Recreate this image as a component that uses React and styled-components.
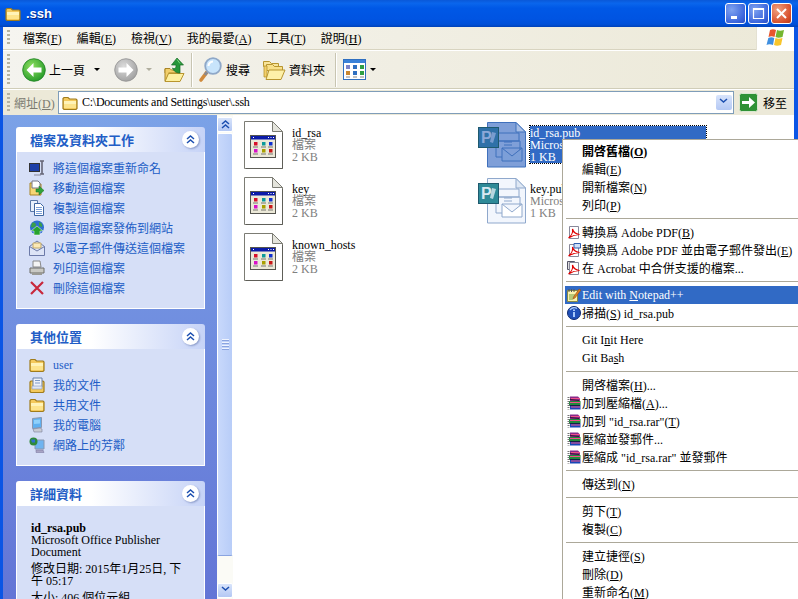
import React from "react";
import styled, { createGlobalStyle } from "styled-components";

const GlobalStyle = createGlobalStyle`
  html, body { margin: 0; padding: 0; background: #ece9d8; }
  body { font-family: "Liberation Serif", "Noto Sans CJK TC", serif; font-size: 12px; color: #000; }
  * { box-sizing: border-box; }
  svg { display: block; flex: none; }
`;

/* "&F" marks the underlined letter, same as a win32 resource string */
const Mnemonic = ({ text }) => {
  const i = text.indexOf("&");
  if (i < 0) return <span>{text}</span>;
  return (
    <span>
      {text.slice(0, i)}
      <u>{text[i + 1]}</u>
      {text.slice(i + 2)}
    </span>
  );
};

// ---------- icons ----------
const FolderIcon = ({ size = 16 }) => (
  <svg width={size} height={size} viewBox="0 0 16 16">
    <path d="M1 5V3.500L2 2.500h4l1.500 1.500H14l1 1v8.500l-1 1H2l-1-1z" fill="#f4c95c" stroke="#a07c1c" strokeWidth="1.200" />
    <path d="M2 6h12v3H2z" fill="#fff3b8" />
    <path d="M2 9h12v4H2z" fill="#fde48c" />
  </svg>
);

const OpenFolderIcon = () => (
  <svg width="24" height="24" viewBox="0 0 24 24">
    <path d="M1.500 3.500h6l2 2h7v3h-15z" fill="#f8e49a" stroke="#b8952f" />
    <path d="M4.500 6.500h6l2 2h8v4h-16z" fill="#f8e08a" stroke="#b8952f" />
    <path d="M2 8h3v11H2z" fill="#f2cf6b" stroke="#b8952f" strokeWidth=".8" />
    <path d="M7 12h16l-4 9.500H4z" fill="#fdf0a8" stroke="#b8952f" />
  </svg>
);

const NavIcon = ({ id, light, dark, ring, dir }) => (
  <svg width="24" height="24" viewBox="0 0 24 24">
    <defs>
      <radialGradient id={id} cx="40%" cy="35%" r="75%">
        <stop offset="0" stopColor={light} />
        <stop offset="1" stopColor={dark} />
      </radialGradient>
    </defs>
    <circle cx="12" cy="12" r="11.300" fill={`url(#${id})`} stroke={ring} strokeWidth=".8" />
    <path
      d={dir === "left" ? "M4.500 12l7-7v4.500h8v5h-8V19z" : "M19.500 12l-7-7v4.500h-8v5h8V19z"}
      fill="#fff"
    />
  </svg>
);

const UpIcon = () => (
  <svg width="22" height="26" viewBox="0 0 22 26">
    <path d="M2 11.500h5l1.500 1.500H15v3H2z" fill="#f2cf6b" stroke="#a98527" />
    <path d="M2 12v12h1l3-8" fill="#f2cf6b" stroke="#a98527" />
    <path d="M5.500 16.500H21l-4 8H2z" fill="#fdf0a0" stroke="#b8952f" />
    <path d="M14 1l6.500 7H17v8c-3 0-6-1-7.500-5 2 1.500 3.500 0 3.500-2V8H8.500z" fill="#27963a" stroke="#176b26" strokeWidth=".7" />
    <path d="M14 2.500l3 4" stroke="#7fd87f" />
  </svg>
);

const SearchIcon = () => (
  <svg width="24" height="26" viewBox="0 0 24 26">
    <path d="M9 15l-6 8" stroke="#d08a3c" strokeWidth="3.600" strokeLinecap="round" />
    <path d="M9 15l-2 3" stroke="#8a8a90" strokeWidth="3" />
    <circle cx="15" cy="9" r="7.800" fill="#c8e4fb" stroke="#8fa8c8" strokeWidth="1.800" />
    <path d="M10.500 9a4.500 4.500 0 0 1 4.500-4.500" stroke="#fff" strokeWidth="2" fill="none" />
  </svg>
);

const ViewsIcon = () => (
  <svg width="24" height="24" viewBox="0 0 24 24">
    <rect x=".5" y="1.500" width="22" height="20" fill="#fff" stroke="#2f6fc0" />
    <rect x="1" y="2" width="21" height="3" fill="#3b82d8" />
    {[3, 10, 17].map((x, i) => (
      <g key={x}>
        <rect x={x} y="7" width="4" height="4" fill={["#7b82c8", "#2f6fc0", "#2e9e44"][i]} />
        <rect x={x} y="13" width="4" height="4" fill={["#c9872f", "#2f6fc0", "#2e9e44"][i]} />
        <rect x={x} y="18.500" width="4" height="1" fill="#888" />
      </g>
    ))}
  </svg>
);

const FlagIcon = () => (
  <svg width="22" height="20" viewBox="0 0 22 20">
    <path d="M5 2c2-1 4-1 6 0l-1.500 7c-2-1-4-1-6 0z" fill="#e8562c" />
    <path d="M12 2c2 1 4 1 7 0l-1.500 7c-3 1-5 1-7 0z" fill="#74b62f" />
    <path d="M3.300 10c2-1 4-1 6 0L8 17c-2-1-5-1-6.500 0z" fill="#3f8fe0" />
    <path d="M10.500 10c2 1 4 1 7 0L16 17c-3 1-5 1-7 0z" fill="#f8c52b" />
  </svg>
);

const GoIcon = () => (
  <svg width="19" height="19" viewBox="0 0 19 19">
    <rect x=".5" y=".5" width="18" height="18" rx="2" fill="#2f9235" stroke="#d8e8d0" />
    <path d="M3 8h7V4l6 5.500-6 5.500v-4H3z" fill="#fff" />
  </svg>
);

const PlainFileIcon = () => (
  <svg width="39" height="48" viewBox="0 0 39 48">
    <path d="M.5.5h28l10 10v37H.5z" fill="#fff" stroke="#7c7c74" />
    <path d="M2 47.500h36.500V12" stroke="#5e5e58" fill="none" />
    <path d="M28.500.5v10h10z" fill="#e4e4dc" stroke="#7c7c74" />
    <rect x="6.500" y="14.500" width="25" height="22" fill="#ece9d8" stroke="#55554f" />
    <rect x="7" y="15" width="24" height="3.500" fill="#0a1aa8" />
    <path d="M9 16.500h1M24 16.500h1M26.500 16.500h1M29 16.500h1" stroke="#fff" />
    {[
      [11, 21, "#d8102a"],
      [19, 21, "#0c9a9a"],
      [26, 21, "#1030d0"],
      [11, 28, "#d810c8"],
      [19, 28, "#a8a000"],
      [26, 28, "#c81818"],
    ].map(([x, y, c]) => (
      <g key={`${x}-${y}`}>
        <rect x={x - 1} y={y} width="3.500" height="3.500" fill={c} />
        <path d={`M${x - 2} ${y + 5}h5`} stroke="#77776f" />
      </g>
    ))}
  </svg>
);

const PublisherIcon = ({ selected }) => {
  const page = selected ? "#7f9fd8" : "#f2f6fd";
  const line = selected ? "#3f70bc" : "#8fa8cc";
  const badge = selected ? "#2f71a8" : "#2e8a98";
  const inner = selected ? "#8ba8d8" : "#d8e8f2";
  return (
    <svg width="52" height="46" viewBox="0 0 52 46">
      <path d="M9.500.5H38l9.500 9.500v35H9.500z" fill={page} stroke={line} />
      <path d="M38 .5V10h9.500z" fill={selected ? "#a9c0e6" : "#dfe8f4"} stroke={line} />
      <path d="M15 11h26v8H15zM18 19h24v16H18z" fill="none" stroke={line} />
      <path d="M24 26h20v13H24zM24 26l10 8 10-8" fill={selected ? "#7c9fd8" : "#fff"} stroke={line} />
      <path d="M26 20h8M26 23h8" stroke={line} />
      <rect x=".5" y="5.500" width="20" height="20" fill={badge} stroke="#1e5a6e" />
      <text x="3" y="21" fontFamily="Liberation Sans" fontWeight="700" fontSize="16" fill={inner}>
        P
      </text>
      <path d="M14 10l4 1-3 10-3-1z" fill={inner} opacity=".8" />
    </svg>
  );
};

const RenameIcon = () => (
  <svg width="16" height="16" viewBox="0 0 16 16">
    <rect x=".5" y="3.500" width="10" height="8" fill="#1d3fa8" stroke="#333" />
    <path d="M11 1h4M13 1v13M11 14h4" stroke="#667" strokeWidth="1.600" fill="none" />
    <path d="M5 15h7" stroke="#889" />
  </svg>
);
const MoveIcon = () => (
  <svg width="16" height="16" viewBox="0 0 16 16">
    <path d="M1 15V3h5l1 1h5v11z" fill="#f6d675" stroke="#a98527" />
    <path d="M3 1h6l2 2v5H3z" fill="#fff" stroke="#778" />
    <path d="M7 9h3V6l5 4.500-5 4.500v-3H7z" fill="#2fa33a" stroke="#1b6e22" strokeWidth=".5" />
  </svg>
);
const CopyIcon = () => (
  <svg width="16" height="16" viewBox="0 0 16 16">
    <path d="M1.500.5h7v11h-7z" fill="#e8f0fb" stroke="#5a78a8" />
    <path d="M5.500 3.500h6l3 3v9h-9z" fill="#fff" stroke="#3f66a0" />
    <path d="M7 7.500h6M7 9.500h6M7 11.500h6M7 13.500h6" stroke="#7ba0d8" />
  </svg>
);
const PublishIcon = () => (
  <svg width="16" height="16" viewBox="0 0 16 16">
    <circle cx="8" cy="7.500" r="7" fill="#2f6fd0" />
    <path d="M3 3c2-1 4 0 4 2S4 8 2 7zM10 2c2 0 4 3 3 5l-3-1z" fill="#3aa04a" />
    <path d="M8 6l6 5h-3v4H5v-4H2z" fill="#27a32f" stroke="#fff" strokeWidth=".5" />
  </svg>
);
const MailIcon = () => (
  <svg width="16" height="16" viewBox="0 0 16 16">
    <path d="M.5 6.500L8 1l7.500 5.500v9H.5z" fill="#dde4f6" stroke="#6c7aa8" />
    <path d="M4 3h8v5H4z" fill="#fbe9b6" stroke="#c0a868" />
    <path d="M.5 6.500L8 11l7.500-4.500" fill="none" stroke="#6c7aa8" />
  </svg>
);
const PrintIcon = () => (
  <svg width="16" height="16" viewBox="0 0 16 16">
    <path d="M4 1h7l1 6H4z" fill="#f4f4f4" stroke="#888" />
    <path d="M1 8h14v5H1z" fill="#c9c9c4" stroke="#6c6c68" />
    <path d="M3 13h10v2H3z" fill="#9a9a94" />
  </svg>
);
const DeleteIcon = () => (
  <svg width="16" height="16" viewBox="0 0 16 16">
    <path d="M2 2l12 12M14 2L2 14" stroke="#c8283c" strokeWidth="2.200" />
  </svg>
);
const DocsIcon = () => (
  <svg width="16" height="16" viewBox="0 0 16 16">
    <path d="M1 14.500V5l1-1h12l1 1v9.500l-1 1H2z" fill="#f4c95c" stroke="#a07c1c" strokeWidth="1.200" />
    <path d="M4 1h9v9H4z" fill="#eef2fb" stroke="#6880a8" />
    <path d="M6 3.500h5M6 6h5" stroke="#7e9ac8" />
    <path d="M3 9h10v3H3z" fill="#dfe6f5" stroke="#8498bc" strokeWidth=".6" />
  </svg>
);
const ComputerIcon = () => (
  <svg width="16" height="16" viewBox="0 0 16 16">
    <path d="M3.500 1.500l9-1v10l-9 1z" fill="#5fb0f0" stroke="#8a98b0" />
    <path d="M5 3l6-.5v4L5 7z" fill="#8fd0fa" />
    <path d="M4 12l7-1 2 1v3H5z" fill="#c8cbd4" stroke="#7a7f98" strokeWidth=".6" />
  </svg>
);
const NetworkIcon = () => (
  <svg width="16" height="16" viewBox="0 0 16 16">
    <path d="M6 3h9v9H6z" fill="#6fb4f0" stroke="#8a98b0" />
    <path d="M7 13h7l1 2.500H7z" fill="#a8a4c4" stroke="#75709a" strokeWidth=".5" />
    <circle cx="4.500" cy="4.500" r="4" fill="#2f8a3a" />
    <path d="M2 2.500h4v3H3z" fill="#2f6fd0" />
  </svg>
);

const PdfIcon = ({ mail, merge }) => (
  <svg width="14" height="14" viewBox="0 0 14 14">
    {merge && <path d="M.5.5h7v8h-7z" fill="#ddd" stroke="#556" />}
    <path d="M2.500 1.500h9v12h-9z" fill="#fff" stroke="#889" />
    {mail && <path d="M7 .5h6.500v4.500H7z" fill="#cfe0f8" stroke="#2f5fb0" />}
    <path d="M1.500 13c3-2 4.500-6 4-9 .8 3 3 5 7 5.500-3.500 0-7 1-11 3.500z" fill="none" stroke="#e00000" strokeWidth="1.200" />
  </svg>
);
const NotepadIcon = () => (
  <svg width="14" height="14" viewBox="0 0 14 14">
    <path d="M.5 2.500h10v11H.5z" fill="#fbf2b0" stroke="#8a8a40" />
    <path d="M2 1v3M4.500 1v3M7 1v3" stroke="#555" />
    <path d="M2 7h6M2 9h5M2 11h4" stroke="#70a040" />
    <path d="M12 1l2 1-6 8-2 1 .5-2z" fill="#e08020" stroke="#804010" strokeWidth=".5" />
  </svg>
);
const ScanIcon = () => (
  <svg width="14" height="14" viewBox="0 0 14 14">
    <circle cx="7" cy="7" r="6.500" fill="#2050b8" stroke="#102a70" />
    <path d="M3 4a5 5 0 0 1 7-1.500" stroke="#a8c8f8" strokeWidth="1.400" fill="none" />
    <path d="M6 6h2v5H6zM6 3.500h2v1.500H6z" fill="#a8c8f8" />
  </svg>
);
const RarIcon = () => (
  <svg width="14" height="14" viewBox="0 0 14 14">
    <path d="M3 0.500h8l2 2v3H3z" fill="#8a2a8a" />
    <path d="M2 5h11.500v4H2z" fill="#1f8a3c" />
    <path d="M3 9h10.500v4.500H3z" fill="#1848b8" />
    <path d="M4 2.500h9M3 6.500h10M4 11h9" stroke="#f0508a" />
    <path d="M3 3.500l9 1M2 9.500h11" stroke="#111" strokeWidth=".7" />
    <path d="M1.500 1v12.500" stroke="#777" strokeDasharray="1 1" strokeWidth="2" />
  </svg>
);

const Chevrons = ({ dir = "up" }) => (
  <svg width="9" height="9" viewBox="0 0 9 9">
    <path
      d={dir === "up" ? "M1 4l3.500-3L8 4M1 8l3.500-3L8 8" : "M1 1l3.500 3L8 1"}
      fill="none"
      stroke="#1c4fb0"
      strokeWidth="1.500"
    />
  </svg>
);

// ---------- window chrome ----------
const Desktop = styled.div`
  position: relative;
  width: 798px;
  height: 599px;
  overflow: hidden;
  display: flex;
  flex-direction: column;
`;

const TitleBar = styled.div`
  height: 27px;
  flex: none;
  display: flex;
  align-items: center;
  padding: 0 6px 0 5px;
  background: linear-gradient(180deg, #0a58d8 0%, #0a66ec 12%, #0058e6 30%, #0054e2 70%, #0050d8 90%, #0042b8 100%);
`;

const TitleText = styled.span`
  margin-left: 5px;
  color: #fff;
  font: 700 13px "Liberation Sans", sans-serif;
  text-shadow: 1px 1px 0 #0a2a80;
  flex: 1;
`;

const CaptionButtons = styled.div`
  display: flex;
  gap: 2px;
`;

const CaptionButton = styled.div`
  width: 21px;
  height: 21px;
  border: 1px solid #fff;
  border-radius: 3px;
  display: flex;
  align-items: center;
  justify-content: center;
  background: ${(p) =>
    p.$close
      ? "radial-gradient(circle at 30% 30%, #f0a080, #d8502c 70%, #b83a18)"
      : "radial-gradient(circle at 30% 30%, #7ea2f0, #3c66dc 70%, #2a4ec4)"};
`;

const Frame = styled.div`
  flex: 1;
  min-height: 0;
  display: flex;
  flex-direction: column;
  border-left: 3px solid #0a55e5;
  border-right: 4px solid #0a55e5;
`;

const MenuBar = styled.div`
  height: 23px;
  flex: none;
  display: flex;
  align-items: center;
  background: linear-gradient(90deg, #f6f5f0, #ece9d8);
  border-bottom: 1px solid #d8d4c0;
`;

const Grip = styled.div`
  width: 3px;
  height: ${(p) => p.$h || 16}px;
  margin: 0 ${(p) => p.$after || 11}px 0 4px;
  flex: none;
  background: repeating-linear-gradient(180deg, #b5b2a0 0 2px, transparent 2px 4px);
`;

const MenuItems = styled.div`
  display: flex;
  flex: 1;
  gap: 15px;
  padding-left: 2px;
`;

const MenuLabel = styled.span`
  white-space: nowrap;
`;

const FlagBox = styled.div`
  width: 38px;
  height: 23px;
  background: #fff;
  display: flex;
  align-items: center;
  justify-content: center;
  border-left: 1px solid #e4e1d2;
`;

const ToolBar = styled.div`
  height: 39px;
  flex: none;
  display: flex;
  align-items: center;
  border-top: 1px solid #fff;
  border-bottom: 1px solid #d0cdb8;
  background: linear-gradient(90deg, #f4f3ee, #ece9d8);
`;

const ToolButton = styled.div`
  display: flex;
  align-items: center;
  gap: ${(p) => p.$gap ?? 5}px;
  margin: 0 ${(p) => p.$mr ?? 0}px 0 ${(p) => p.$ml ?? 0}px;
  white-space: nowrap;
`;

const Caret = styled.span`
  width: 0;
  height: 0;
  border: 3px solid transparent;
  border-top-color: ${(p) => p.$color || "#000"};
  border-bottom: 0;
`;

const ToolSep = styled.div`
  width: 1px;
  height: 34px;
  margin: 0 ${(p) => p.$r ?? 7}px 0 ${(p) => p.$l ?? 7}px;
  background: #c8c5b2;
  box-shadow: 1px 0 0 #fff;
`;

const AddressBar = styled.div`
  height: 26px;
  flex: none;
  display: flex;
  align-items: center;
  border-top: 1px solid #fff;
  background: #ece9d8;
  padding-right: 7px;
`;

const AddressLabel = styled.span`
  color: #7a7a70;
  width: 44px;
  white-space: nowrap;
`;

const AddressField = styled.div`
  flex: 1;
  height: 23px;
  display: flex;
  align-items: center;
  gap: 4px;
  padding: 0 1px 0 3px;
  background: #fff;
  border: 1px solid #7f9db9;
`;

const AddressPath = styled.span`
  flex: 1;
  letter-spacing: -0.25px;
`;

const ComboArrow = styled.div`
  width: 16px;
  height: 15px;
  border-radius: 2px;
  display: flex;
  align-items: center;
  justify-content: center;
  background: linear-gradient(180deg, #d8e4fb, #b4c8f4);
`;

const GoButton = styled.div`
  display: flex;
  align-items: center;
  gap: 5px;
  margin-left: 5px;
`;

// ---------- body ----------
const Body = styled.div`
  flex: 1;
  min-height: 0;
  display: flex;
  background: #fff;
`;

const Sidebar = styled.div`
  width: 214px;
  flex: none;
  padding: 12px 12px 0 13px;
  display: flex;
  flex-direction: column;
  gap: 15px;
  overflow: hidden;
  background: linear-gradient(180deg, #7ba2e7, #6375d6);
`;

const Panel = styled.section`
  flex: none;
`;

const PanelHead = styled.div`
  height: 25px;
  display: flex;
  align-items: center;
  justify-content: space-between;
  padding: 0 6px 0 14px;
  border-radius: 3px 3px 0 0;
  background: linear-gradient(90deg, #fff 40%, #c6d3f7);
  color: #215dc6;
  font-size: 13px;
  font-weight: 700;
`;

const RoundButton = styled.div`
  width: 17px;
  height: 17px;
  border-radius: 50%;
  background: #fff;
  box-shadow: 1px 1px 2px #8a9ac8;
  display: flex;
  align-items: center;
  justify-content: center;
`;

const PanelBody = styled.div`
  padding: 6px 0 10px 12px;
  background: #d6dff7;
  border: 1px solid #fff;
  border-top: 0;
`;

const TaskRow = styled.div`
  height: 20px;
  display: flex;
  align-items: center;
  gap: 8px;
  color: #215dc6;
  white-space: nowrap;
`;

const DetailBody = styled.div`
  padding: 16px 14px 0 14px;
  background: #d6dff7;
  border: 1px solid #fff;
  border-top: 0;
  line-height: 12px;
`;

const DetailName = styled.div`
  font-weight: 700;
`;

const DetailLine = styled.div`
  margin-top: ${(p) => p.$mt ?? 0}px;
`;

const ScrollBar = styled.div`
  width: 16px;
  flex: none;
  display: flex;
  flex-direction: column;
  padding: 2px 0 1px;
  background: #fbfbf6;
`;

const ScrollBtn = styled.div`
  height: 15px;
  flex: none;
  border: 1px solid #fff;
  border-radius: 2px;
  display: flex;
  align-items: center;
  justify-content: center;
  background: linear-gradient(180deg, #d8e4fb, #b4c8f4);
`;

const ScrollThumb = styled.div`
  height: 423px;
  flex: none;
  margin-top: 1px;
  border: 1px solid #fff;
  border-bottom-color: #8aa4e0;
  border-radius: 2px;
  display: flex;
  flex-direction: column;
  align-items: center;
  justify-content: center;
  gap: 1px;
  background: linear-gradient(90deg, #c8d8fb, #b8cdf8);
`;

const ScrollTrack = styled.div`
  flex: 1;
`;

const GripLine = styled.span`
  width: 7px;
  height: 1px;
  background: #eef3fe;
  box-shadow: 0 1px 0 #8aa4e0;
  margin-bottom: 1px;
`;

const FileArea = styled.div`
  flex: 1;
  min-width: 0;
  padding: 6px 0 0 11px;
  display: grid;
  grid-template-columns: 238px 238px;
  grid-auto-rows: 56px;
  align-content: start;
  background: #fff;
`;

const Tile = styled.div`
  display: flex;
  align-items: flex-start;
`;

const TileIcon = styled.div`
  flex: none;
  display: flex;
  margin-left: ${(p) => (p.$pub ? -4 : 0)}px;
  padding-top: ${(p) => (p.$pub ? 1 : 0)}px;
  width: ${(p) => (p.$pub ? 52 : 48)}px;
`;

const TileText = styled.div`
  margin-top: 5px;
  padding-top: 1px;
  width: 176px;
  height: 37px;
  line-height: 12px;
  white-space: nowrap;
  overflow: hidden;
  color: ${(p) => (p.$selected ? "#fff" : "#000")};
  background: ${(p) => (p.$selected ? "#316ac5" : "transparent")};
  outline: ${(p) => (p.$selected ? "1px dotted #000" : "none")};
`;

const TileMeta = styled.div`
  color: ${(p) => (p.$selected ? "#fff" : "#808080")};
`;

// ---------- context menu, sits over the window ----------
const ContextMenu = styled.div`
  position: absolute;
  left: 562px;
  top: 139px;
  width: 260px;
  height: 470px;
  padding: 2px;
  background: #fff;
  border: 1px solid #aca899;
`;

const Row = styled.div`
  height: 18px;
  display: flex;
  align-items: center;
  white-space: nowrap;
  color: ${(p) => (p.$hot ? "#fff" : "#000")};
  background: ${(p) => (p.$hot ? "#316ac5" : "transparent")};
  font-weight: ${(p) => (p.$bold ? 700 : 400)};
`;

const RowIcon = styled.span`
  width: 17px;
  flex: none;
  padding-left: 2px;
`;

const Sep = styled.div`
  height: 1px;
  margin: 4px 0 4px 1px;
  background: #aca899;
`;

const tasks = [
  [RenameIcon, "將這個檔案重新命名"],
  [MoveIcon, "移動這個檔案"],
  [CopyIcon, "複製這個檔案"],
  [PublishIcon, "將這個檔案發佈到網站"],
  [MailIcon, "以電子郵件傳送這個檔案"],
  [PrintIcon, "列印這個檔案"],
  [DeleteIcon, "刪除這個檔案"],
];

const places = [
  [FolderIcon, "user"],
  [DocsIcon, "我的文件"],
  [FolderIcon, "共用文件"],
  [ComputerIcon, "我的電腦"],
  [NetworkIcon, "網路上的芳鄰"],
];

const files = [
  { name: "id_rsa", type: "檔案", size: "2 KB" },
  { name: "id_rsa.pub", type: "Microsoft Office Publisher Document", size: "1 KB", pub: true, selected: true },
  { name: "key", type: "檔案", size: "2 KB" },
  { name: "key.pub", type: "Microsoft Office Publisher Document", size: "1 KB", pub: true },
  { name: "known_hosts", type: "檔案", size: "2 KB" },
];

const menuGroups = [
  [
    { label: "開啓舊檔(&O)", bold: true },
    { label: "編輯(&E)" },
    { label: "開新檔案(&N)" },
    { label: "列印(&P)" },
  ],
  [
    { label: "轉換爲 Adobe PDF(&B)", icon: <PdfIcon /> },
    { label: "轉換爲 Adobe PDF 並由電子郵件發出(&E)", icon: <PdfIcon mail /> },
    { label: "在 Acrobat 中合併支援的檔案...", icon: <PdfIcon merge /> },
  ],
  [
    { label: "Edit with &Notepad++", icon: <NotepadIcon />, hot: true },
    { label: "掃描(&S) id_rsa.pub", icon: <ScanIcon /> },
  ],
  [{ label: "Git I&nit Here" }, { label: "Git Ba&sh" }],
  [
    { label: "開啓檔案(&H)..." },
    { label: "加到壓縮檔(&A)...", icon: <RarIcon /> },
    { label: '加到 "id_rsa.rar"(&T)', icon: <RarIcon /> },
    { label: "壓縮並發郵件...", icon: <RarIcon /> },
    { label: '壓縮成 "id_rsa.rar" 並發郵件', icon: <RarIcon /> },
  ],
  [{ label: "傳送到(&N)" }],
  [{ label: "剪下(&T)" }, { label: "複製(&C)" }],
  [{ label: "建立捷徑(&S)" }, { label: "刪除(&D)" }, { label: "重新命名(&M)" }],
];

const PanelHeader = ({ title }) => (
  <PanelHead>
    {title}
    <RoundButton>
      <Chevrons />
    </RoundButton>
  </PanelHead>
);

export default function App() {
  return (
    <Desktop>
      <GlobalStyle />
      <TitleBar>
        <FolderIcon />
        <TitleText>.ssh</TitleText>
        <CaptionButtons>
          <CaptionButton>
            <svg width="13" height="13" viewBox="0 0 13 13">
              <path d="M2 9h6v3H2z" fill="#fff" />
            </svg>
          </CaptionButton>
          <CaptionButton>
            <svg width="13" height="13" viewBox="0 0 13 13">
              <path d="M1.500 1.500h10v10h-10z M1 2.500h11" fill="none" stroke="#fff" strokeWidth="1.200" />
            </svg>
          </CaptionButton>
          <CaptionButton $close>
            <svg width="13" height="13" viewBox="0 0 13 13">
              <path d="M2 2l9 9M11 2l-9 9" stroke="#fff" strokeWidth="2" />
            </svg>
          </CaptionButton>
        </CaptionButtons>
      </TitleBar>

      <Frame>
        <MenuBar>
          <Grip />
          <MenuItems>
            {["檔案(&F)", "編輯(&E)", "檢視(&V)", "我的最愛(&A)", "工具(&T)", "說明(&H)"].map((m) => (
              <MenuLabel key={m}>
                <Mnemonic text={m} />
              </MenuLabel>
            ))}
          </MenuItems>
          <FlagBox>
            <FlagIcon />
          </FlagBox>
        </MenuBar>

        <ToolBar>
          <Grip $h={32} $after={12} />
          <ToolButton $gap={3} $mr={9}>
            <NavIcon id="backFill" dir="left" light="#8fe060" dark="#1c9424" ring="#1a8020" />
            上一頁
          </ToolButton>
          <Caret />
          <ToolButton $ml={14} $mr={8}>
            <NavIcon id="fwdFill" dir="right" light="#dcdcdc" dark="#9a9a9a" ring="#909090" />
          </ToolButton>
          <Caret $color="#b0ae9e" />
          <ToolButton $ml={11}>
            <UpIcon />
          </ToolButton>
          <ToolSep $l={6} $r={6} />
          <ToolButton $gap={4} $mr={12}>
            <SearchIcon />
            搜尋
          </ToolButton>
          <ToolButton $gap={3}>
            <OpenFolderIcon />
            資料夾
          </ToolButton>
          <ToolSep $l={10} />
          <ToolButton $gap={3}>
            <ViewsIcon />
            <Caret />
          </ToolButton>
        </ToolBar>

        <AddressBar>
          <Grip $h={20} $after={4} />
          <AddressLabel>
            <Mnemonic text="網址(&D)" />
          </AddressLabel>
          <AddressField>
            <FolderIcon />
            <AddressPath>C:\Documents and Settings\user\.ssh</AddressPath>
            <ComboArrow>
              <Chevrons dir="down" />
            </ComboArrow>
          </AddressField>
          <GoButton>
            <GoIcon />
            移至
          </GoButton>
        </AddressBar>

        <Body>
          <Sidebar>
            <Panel>
              <PanelHeader title="檔案及資料夾工作" />
              <PanelBody>
                {tasks.map(([Icon, label]) => (
                  <TaskRow key={label}>
                    <Icon />
                    {label}
                  </TaskRow>
                ))}
              </PanelBody>
            </Panel>
            <Panel>
              <PanelHeader title="其他位置" />
              <PanelBody>
                {places.map(([Icon, label]) => (
                  <TaskRow key={label}>
                    <Icon />
                    {label}
                  </TaskRow>
                ))}
              </PanelBody>
            </Panel>
            <Panel>
              <PanelHeader title="詳細資料" />
              <DetailBody>
                <DetailName>id_rsa.pub</DetailName>
                <DetailLine>Microsoft Office Publisher Document</DetailLine>
                <DetailLine $mt={5}>修改日期: 2015年1月25日, 下午 05:17</DetailLine>
                <DetailLine $mt={5}>大小: 406 個位元組</DetailLine>
              </DetailBody>
            </Panel>
          </Sidebar>

          <ScrollBar>
            <ScrollBtn>
              <Chevrons />
            </ScrollBtn>
            <ScrollThumb>
              <GripLine />
              <GripLine />
              <GripLine />
              <GripLine />
            </ScrollThumb>
            <ScrollTrack />
            <ScrollBtn>
              <Chevrons dir="down" />
            </ScrollBtn>
          </ScrollBar>

          <FileArea>
            {files.map((f) => (
              <Tile key={f.name}>
                <TileIcon $pub={f.pub}>{f.pub ? <PublisherIcon selected={f.selected} /> : <PlainFileIcon />}</TileIcon>
                <TileText $selected={f.selected}>
                  {f.name}
                  <TileMeta $selected={f.selected}>{f.type}</TileMeta>
                  <TileMeta $selected={f.selected}>{f.size}</TileMeta>
                </TileText>
              </Tile>
            ))}
          </FileArea>
        </Body>
      </Frame>

      <ContextMenu>
        {menuGroups.map((group, g) => (
          <React.Fragment key={g}>
            {g > 0 && <Sep />}
            {group.map((item) => (
              <Row key={item.label} $hot={item.hot} $bold={item.bold}>
                <RowIcon>{item.icon}</RowIcon>
                <Mnemonic text={item.label} />
              </Row>
            ))}
          </React.Fragment>
        ))}
      </ContextMenu>
    </Desktop>
  );
}
